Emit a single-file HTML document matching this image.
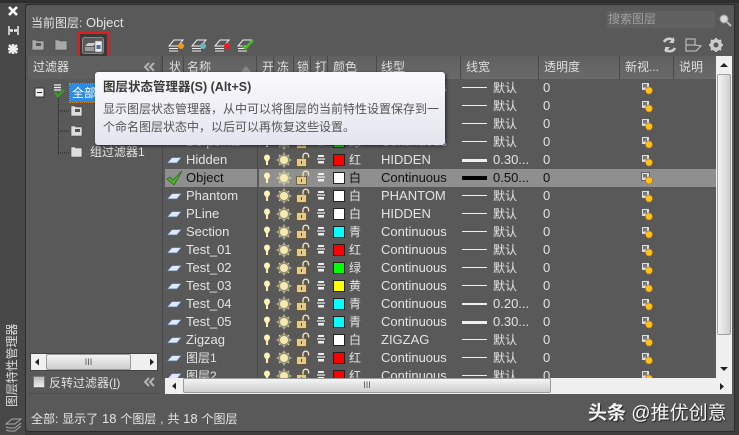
<!DOCTYPE html>
<html><head><meta charset="utf-8">
<style>
*{box-sizing:border-box}
html,body{margin:0;padding:0}
body{width:739px;height:435px;overflow:hidden;position:relative;background:#3c3c3c;font-family:"Liberation Sans","Noto Sans CJK SC",sans-serif;font-size:13px;color:#e4e4e4;line-height:18px}
.a{position:absolute;white-space:nowrap}
.hd{top:56px;height:23px;background:linear-gradient(#606060,#6a6a6a);line-height:23px;color:#dedede;border-right:1px solid #4a4a4a;font-size:12px}
.r{position:absolute;left:163px;width:553px;height:18px}
.r span{position:absolute;top:0;white-space:nowrap}
.r .n{left:23px}.r .c{left:186px;font-size:12px}.r .l{left:218px}.r .w{left:330px}.r .z{left:380px}
.r .d{font-size:12px}.r .g{font-size:12px}
.r i{position:absolute;left:170px;top:3px;width:12px;height:12px;border:1px solid #222}
.r b{position:absolute;left:299px;width:25px;background:#eee;top:8px;height:1px}
.r svg{position:absolute;left:0;top:0;width:553px;height:18px}
.sh{fill:#dfe8f8;stroke:#4d6f9e;stroke-width:.8}
</style></head><body>
<svg width="0" height="0" style="position:absolute"><defs>
<g id="cols">
<path d="M104 3.500a3 3 0 0 1 3 3c0 2-1.500 2.500-2 4v3.500h-2v-3.500c-.5-1.500-2-2-2-4a3 3 0 0 1 3-3z" fill="#fff4b8"/>
<circle cx="121" cy="9" r="6" fill="#f2e7a8" opacity=".35"/>
<circle cx="121" cy="9" r="4" fill="#f5eab0"/>
<path d="M121 1.500v2.500M121 14v2.500M113.500 9h2.500M126 9h2.500M116 4l1.500 1.500M124.500 12.500l1.500 1.500M126 4l-1.500 1.500M117.500 12.500l-1.500 1.500" stroke="#e8dca0" stroke-width="1"/>
<rect x="133.500" y="7.500" width="10" height="8" fill="#e2c98e" stroke="#5b4a22" stroke-width=".7"/>
<path d="M140 7.500V5a2.800 2.800 0 0 1 5.600 0V6.500" fill="none" stroke="#f0e2b8" stroke-width="1.400"/>
<path d="M138.500 10v3" stroke="#5b4a22"/>
<path d="M155 4h6v2h-6zM155 10h6v2.500h-6z" fill="#eee"/><path d="M154 8h8" stroke="#eee" stroke-width="1.200"/>
<rect x="478.500" y="3.500" width="8" height="8" fill="#ddd" stroke="#333" stroke-width=".6"/>
<rect x="480" y="5" width="4" height="3.500" fill="#777"/>
<circle cx="486" cy="11.500" r="3.500" fill="#ffc21c" stroke="#c07a10" stroke-width=".7"/>
</g>
<path id="sh" class="sh" d="M4 12L9 6.500H18.500L14 12Z"/>
<path id="fo" d="M1 3h4l1 1h6v9H1z" fill="#ddd" stroke="#444" stroke-width=".6"/>
<path id="ch" d="M5 1L1 5l4 4M10 1L6 5l4 4" fill="none" stroke="#b4b4b4" stroke-width="2"/>
</defs></svg>

<!-- left strip -->
<div class="a" style="left:0;top:0;width:25px;height:435px;background:#474747"></div>
<div class="a" style="left:0;top:0;width:739px;height:3px;background:#2e2e2e"></div>
<svg class="a" style="left:0;top:0" width="25" height="435">
<path d="M9 7l8 8M17 7l-8 8" stroke="#fff" stroke-width="2.600"/>
<path d="M9 26v9M18 26v9" stroke="#eee" stroke-width="1.500"/><path d="M10 30.500l3 0M17 30.500l-3 0" stroke="#eee" stroke-width="2.500"/>
<path d="M9 45l8 8M17 45l-8 8M13 44v10M8 49h10" stroke="#eee" stroke-width="2.400"/>
<g fill="none" stroke="#aaa"><path d="M6 424l6-5h9l-6 5zM6 427l3 1h6l6-5M6 430l3 1h6l6-5"/></g>
</svg>
<div class="a" style="left:5px;top:407px;transform-origin:0 0;transform:rotate(-90deg);font-size:12px;color:#ddd;line-height:14px;letter-spacing:-.1px;width:90px">图层特性管理器</div>

<!-- main panel -->
<div class="a" style="left:25px;top:4px;width:710px;height:428px;background:#595959;border:1px solid #2c2c2c;border-radius:4px 0 0 4px"></div>
<div class="a" style="left:31px;top:14px"><span style="font-size:12px">当前图层:</span> Object</div>
<div class="a" style="left:607px;top:11px;width:108px;height:17px;background:#616161;color:#a0a0a0;line-height:17px;font-size:12px;padding-left:1px">搜索图层</div>
<svg class="a" style="left:718px;top:13px" width="14" height="14"><circle cx="6" cy="6" r="4" fill="#d8d8d8" stroke="#999"/><path d="M9 9l4 4" stroke="#bbb" stroke-width="2"/></svg>

<!-- top icons -->
<svg class="a" style="left:31px;top:37px" width="40" height="16">
<path d="M1 3h4l1 1h7v9H1z" fill="#a8a8a8" stroke="#444" stroke-width=".6"/><rect x="5" y="6" width="5" height="3" fill="#555"/>
<path d="M24 3h4l1 1h7v9H24z" fill="#a8a8a8" stroke="#444" stroke-width=".6"/>
</svg>
<div class="a" style="left:77px;top:31px;width:33px;height:31px;border:3px solid #e01e1e;background:#3a3a3a"></div>
<svg class="a" style="left:82px;top:37px" width="23" height="18"><rect x=".5" y=".5" width="21" height="16" rx="2" fill="#5a5a5a" stroke="#888"/><path d="M3 9l3-3h8l-3 3z" fill="#ccc"/><path d="M3 11h9M3 13h9" stroke="#ddd"/><rect x="13" y="4" width="7" height="11" fill="#e8eef6" stroke="#777" stroke-width=".6"/><rect x="14.500" y="8" width="4" height="4" fill="#4a6f9a"/></svg>
<svg class="a" style="left:90px;top:60px" width="16" height="14"><path d="M7 2L2 12l3-1v3h5v-3l3 1z" fill="#e01e1e"/></svg>

<svg class="a" style="left:166px;top:36px" width="92" height="18">
<g fill="none" stroke="#eee"><path d="M3 10l5-6h9l-5 6zM3 12.500h9M3 15h9"/><path d="M26 10l5-6h9l-5 6zM26 12.500h9M26 15h9"/><path d="M49 10l5-6h9l-5 6zM49 12.500h9M49 15h9"/><path d="M72 10l5-6h9l-5 6zM72 12.500h9M72 15h9"/></g>
<circle cx="15" cy="10" r="3" fill="#f39a1a"/><circle cx="37" cy="10" r="3" fill="#6fb7bd"/><circle cx="61" cy="10" r="3" fill="#ee1c25"/><path d="M76 10l4 2 7-8" fill="none" stroke="#4cb52f" stroke-width="2.500"/>
</svg>
<svg class="a" style="left:660px;top:36px" width="66" height="18">
<path d="M4 6a6 6 0 0 1 10-1M15 12a6 6 0 0 1-10 1" fill="none" stroke="#ccc" stroke-width="2.600"/><path d="M14 1v6h-5M5 17v-6h5" fill="#ccc"/>
<path d="M26 3h9v6l6 1-5 5H26zM26 9h9" fill="none" stroke="#ccc"/>
<circle cx="56" cy="9" r="4.500" fill="none" stroke="#ccc" stroke-width="3"/><path d="M56 2v14M49 9h14M51 4l10 10M61 4L51 14" stroke="#ccc" stroke-width="2"/><circle cx="56" cy="9" r="2.500" fill="#595959"/>
</svg>

<!-- filter panel -->
<div class="a" style="left:28px;top:56px;width:132px;height:23px;background:#606060;line-height:23px;padding-left:5px;color:#e4e4e4;font-size:12px">过滤器</div>
<svg class="a" style="left:144px;top:62px" width="12" height="10"><use href="#ch"/></svg>
<svg class="a" style="left:30px;top:82px" width="75" height="82">
<rect x="5" y="6" width="9" height="9" fill="#eee" stroke="#333"/><path d="M7 10.500h5" stroke="#222"/>
<path d="M24 3h7M24 5.500h7M24 8h7" stroke="#eee" stroke-width="1.200"/><path d="M25 10l3 4 6-6" fill="none" stroke="#3d9a28" stroke-width="2.500"/>
<path d="M28.500 16V71M28 29H40M28 49H40M28 71H40" stroke="#222" stroke-dasharray="1 1"/>
<use href="#fo" x="40" y="21"/><rect x="45" y="27" width="5" height="3" fill="#555"/>
<use href="#fo" x="40" y="41"/><rect x="45" y="47" width="5" height="3" fill="#555"/>
<use href="#fo" x="40" y="62"/>
</svg>
<div class="a" style="left:70px;top:84px;width:30px;height:18px;background:#2e8be6;color:#fff;outline:1px dotted #d08a30;padding-left:2px;font-size:12px">全部</div>
<div class="a" style="left:90px;top:143px;font-size:12px">组过滤器1</div>
<div class="a" style="left:30px;top:353px;width:128px;height:18px;background:#f0f0f0;border:1px solid #444"></div>
<div class="a" style="left:46px;top:354px;width:85px;height:16px;background:linear-gradient(#f2f2f2,#cfcfcf);border:1px solid #9a9a9a;border-radius:2px;color:#555;font-size:9px;line-height:14px;text-align:center">III</div>
<svg class="a" style="left:30px;top:353px" width="128" height="18"><path d="M5 9l4-3.500v7zM120 5.500l4 3.500-4 3.500z" fill="#222"/></svg>
<div class="a" style="left:33px;top:376px;width:12px;height:12px;background:linear-gradient(#bbb,#f0f0f0);border:1px solid #777"></div>
<div class="a" style="left:49px;top:374px;color:#e0e0e0;font-size:12px">反转过滤器(<u>I</u>)</div>
<svg class="a" style="left:144px;top:377px" width="12" height="10"><use href="#ch"/></svg>
<div class="a" style="left:28px;top:393px;width:132px;height:1px;background:#4e4e4e"></div>

<!-- list -->
<div class="a" style="left:163px;top:79px;width:553px;height:299px;overflow:hidden;background:#595959"></div>
<div class="a" style="left:162px;top:56px;width:1px;height:322px;background:#484848"></div>
<div class="a hd" style="left:163px;width:21px;padding-left:6px">状</div>
<div class="a hd" style="left:184px;width:73px;padding-left:3px">名称<svg class="a" style="left:56px;top:9px" width="14" height="8"><path d="M1 7l5-6 5 6z" fill="#8a8a8a"/></svg></div>
<div class="a hd" style="left:257px;width:17px;padding-left:5px">开</div>
<div class="a hd" style="left:274px;width:20px;padding-left:3px">冻</div>
<div class="a hd" style="left:294px;width:17px;padding-left:3px">锁</div>
<div class="a hd" style="left:311px;width:17px;padding-left:4px">打</div>
<div class="a hd" style="left:328px;width:49px;padding-left:5px">颜色</div>
<div class="a hd" style="left:377px;width:84px;padding-left:4px">线型</div>
<div class="a hd" style="left:461px;width:78px;padding-left:5px">线宽</div>
<div class="a hd" style="left:539px;width:81px;padding-left:5px">透明度</div>
<div class="a hd" style="left:620px;width:54px;padding-left:5px">新视...</div>
<div class="a hd" style="left:674px;width:42px;padding-left:5px;border-right:0">说明</div>
<div class="a" style="left:257px;top:79px;width:1px;height:299px;background:#4a4a4a"></div>

<div class="r" style="top:79px"><svg><use href="#sh"/><use href="#cols"/></svg><span class="n">0</span><i style="background:#fff"></i><span class="c">白</span><span class="l">Continuous</span><b></b><span class="w d">默认</span><span class="z">0</span></div>
<div class="r" style="top:97px"><svg><use href="#sh"/><use href="#cols"/></svg><span class="n">Center</span><i style="background:#fff"></i><span class="c">白</span><span class="l">CENTER</span><b></b><span class="w d">默认</span><span class="z">0</span></div>
<div class="r" style="top:115px"><svg><use href="#sh"/><use href="#cols"/></svg><span class="n">Dashed</span><i style="background:#fff"></i><span class="c">白</span><span class="l">DASHED</span><b></b><span class="w d">默认</span><span class="z">0</span></div>
<div class="r" style="top:133px"><svg><use href="#sh"/><use href="#cols"/></svg><span class="n">Defpoints</span><i style="background:#0f0"></i><span class="c">绿</span><span class="l">Continuous</span><b></b><span class="w d">默认</span><span class="z">0</span></div>
<div class="r" style="top:151px"><svg><use href="#sh"/><use href="#cols"/></svg><span class="n">Hidden</span><i style="background:#f00"></i><span class="c">红</span><span class="l">HIDDEN</span><b style="height:3px;top:8px"></b><span class="w">0.30...</span><span class="z">0</span></div>
<div class="r" style="top:169px;background:linear-gradient(90deg,transparent 2px,#8f8f8f 2px)"><div class="a" style="left:94px;top:0;width:2px;height:18px;background:#5a5a5a"></div><svg><path d="M4 10l3-2 3 3 9-9-8 14z" fill="#4fb32b" stroke="#2e6a18" stroke-width=".8"/><use href="#cols"/></svg><span class="n" style="color:#111">Object</span><i style="background:#fff"></i><span class="c" style="color:#111">白</span><span class="l" style="color:#111">Continuous</span><b style="height:4px;top:7px;background:#000"></b><span class="w" style="color:#111">0.50...</span><span class="z" style="color:#111">0</span></div>
<div class="r" style="top:187px"><svg><use href="#sh"/><use href="#cols"/></svg><span class="n">Phantom</span><i style="background:#fff"></i><span class="c">白</span><span class="l">PHANTOM</span><b></b><span class="w d">默认</span><span class="z">0</span></div>
<div class="r" style="top:205px"><svg><use href="#sh"/><use href="#cols"/></svg><span class="n">PLine</span><i style="background:#fff"></i><span class="c">白</span><span class="l">HIDDEN</span><b></b><span class="w d">默认</span><span class="z">0</span></div>
<div class="r" style="top:223px"><svg><use href="#sh"/><use href="#cols"/></svg><span class="n">Section</span><i style="background:#0ff"></i><span class="c">青</span><span class="l">Continuous</span><b></b><span class="w d">默认</span><span class="z">0</span></div>
<div class="r" style="top:241px"><svg><use href="#sh"/><use href="#cols"/></svg><span class="n">Test_01</span><i style="background:#f00"></i><span class="c">红</span><span class="l">Continuous</span><b></b><span class="w d">默认</span><span class="z">0</span></div>
<div class="r" style="top:259px"><svg><use href="#sh"/><use href="#cols"/></svg><span class="n">Test_02</span><i style="background:#0f0"></i><span class="c">绿</span><span class="l">Continuous</span><b></b><span class="w d">默认</span><span class="z">0</span></div>
<div class="r" style="top:277px"><svg><use href="#sh"/><use href="#cols"/></svg><span class="n">Test_03</span><i style="background:#ff0"></i><span class="c">黄</span><span class="l">Continuous</span><b></b><span class="w d">默认</span><span class="z">0</span></div>
<div class="r" style="top:295px"><svg><use href="#sh"/><use href="#cols"/></svg><span class="n">Test_04</span><i style="background:#0ff"></i><span class="c">青</span><span class="l">Continuous</span><b style="height:2px"></b><span class="w">0.20...</span><span class="z">0</span></div>
<div class="r" style="top:313px"><svg><use href="#sh"/><use href="#cols"/></svg><span class="n">Test_05</span><i style="background:#0ff"></i><span class="c">青</span><span class="l">Continuous</span><b style="height:3px"></b><span class="w">0.30...</span><span class="z">0</span></div>
<div class="r" style="top:331px"><svg><use href="#sh"/><use href="#cols"/></svg><span class="n">Zigzag</span><i style="background:#fff"></i><span class="c">白</span><span class="l">ZIGZAG</span><b></b><span class="w d">默认</span><span class="z">0</span></div>
<div class="r" style="top:349px"><svg><use href="#sh"/><use href="#cols"/></svg><span class="n g">图层1</span><i style="background:#f00"></i><span class="c">红</span><span class="l">Continuous</span><b></b><span class="w d">默认</span><span class="z">0</span></div>
<div class="r" style="top:367px"><svg><use href="#sh"/><use href="#cols"/></svg><span class="n g">图层2</span><i style="background:#f00"></i><span class="c">红</span><span class="l">Continuous</span><b></b><span class="w d">默认</span><span class="z">0</span></div>

<!-- scrollbars -->
<div class="a" style="left:165px;top:378px;width:567px;height:16px;background:#f0f0f0"></div>
<div class="a" style="left:183px;top:378px;width:368px;height:15px;background:linear-gradient(#f4f4f4,#cdcdcd);border:1px solid #9a9a9a;border-radius:2px;color:#555;font-size:9px;line-height:13px;text-align:center">III</div>
<div class="a" style="left:716px;top:56px;width:16px;height:322px;background:#f0f0f0"></div>
<div class="a" style="left:717px;top:74px;width:14px;height:261px;background:linear-gradient(90deg,#f4f4f4,#cfcfcf);border:1px solid #a0a0a0;border-radius:2px"></div>
<svg class="a" style="left:165px;top:56px" width="570" height="340">
<path d="M7 330l4-3.500v7zM555 327l4 3.500-4 3.500zM559 7l-4 4h8zM555 311h8l-4 4z" fill="#222"/>
</svg>

<!-- status -->
<div class="a" style="left:31px;top:410px;color:#e6e6e6;font-size:12px;word-spacing:.5px">全部: 显示了 <span style="font-size:13px">18</span> 个图层 , 共 <span style="font-size:13px">18</span> 个图层</div>
<div class="a" style="left:588px;top:401px;font-size:19px;line-height:26px;color:#f4f4f4;text-shadow:1px 1px 1px #222"><b>头条</b> @推优创意</div>

<!-- tooltip -->
<div class="a" style="left:95px;top:72px;width:350px;height:73px;background:linear-gradient(#fbfbfd,#e3e4ee);border-radius:3px;box-shadow:1px 1px 3px #222;color:#555;font-size:12px;line-height:18px">
<div class="a" style="left:8px;top:6px;font-weight:bold;color:#3a3a3a;font-size:12.500px">图层状态管理器(S) (Alt+S)</div>
<div class="a" style="left:8px;top:28px">显示图层状态管理器，从中可以将图层的当前特性设置保存到一</div>
<div class="a" style="left:8px;top:46px">个命名图层状态中，以后可以再恢复这些设置。</div>
</div>
</body></html>
